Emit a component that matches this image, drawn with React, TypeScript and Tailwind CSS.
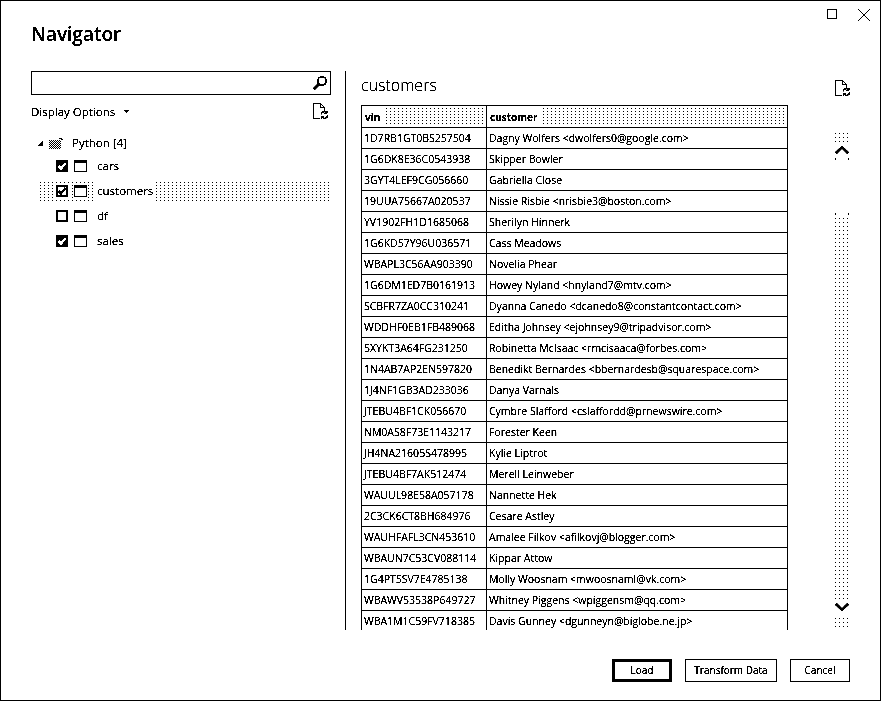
const vinRows: [string, string][] = [
  ["1D7RB1GT0BS257504", "Dagny Wolfers <dwolfers0@google.com>"],
  ["1G6DK8E36C0543938", "Skipper Bowler"],
  ["3GYT4LEF9CG056660", "Gabriella Close"],
  ["19UUA75667A020537", "Nissie Risbie <nrisbie3@boston.com>"],
  ["YV1902FH1D1685068", "Sherilyn Hinnerk"],
  ["1G6KD57Y96U036571", "Cass Meadows"],
  ["WBAPL3C56AA903390", "Novelia Phear"],
  ["1G6DM1ED7B0161913", "Howey Nyland <hnyland7@mtv.com>"],
  ["SCBFR7ZA0CC310241", "Dyanna Canedo <dcanedo8@constantcontact.com>"],
  ["WDDHF0EB1FB489068", "Editha Johnsey <ejohnsey9@tripadvisor.com>"],
  ["5XYKT3A64FG231250", "Robinetta McIsaac <rmcisaaca@forbes.com>"],
  ["1N4AB7AP2EN597820", "Benedikt Bernardes <bbernardesb@squarespace.com>"],
  ["1J4NF1GB3AD233036", "Danya Varnals"],
  ["JTEBU4BF1CK056670", "Cymbre Slafford <cslaffordd@prnewswire.com>"],
  ["NM0AS8F73E1143217", "Forester Keen"],
  ["JH4NA21605S478995", "Kylie Liptrot"],
  ["JTEBU4BF7AK512474", "Merell Leinweber"],
  ["WAUUL98E58A057178", "Nannette Hek"],
  ["2C3CK6CT8BH684976", "Cesare Astley"],
  ["WAUHFAFL3CN453610", "Amalee Filkov <afilkovj@blogger.com>"],
  ["WBAUN7C53CV088114", "Kippar Attow"],
  ["1G4PT5SV7E4785138", "Molly Woosnam <mwoosnaml@vk.com>"],
  ["WBAWV53538P649727", "Whitney Piggens <wpiggensm@qq.com>"],
  ["WBA1M1C59FV718385", "Davis Gunney <dgunneyn@biglobe.ne.jp>"],
];

const dither =
  "[background-image:linear-gradient(#fff_2px,transparent_2px),linear-gradient(90deg,#000_1px,transparent_1px)] [background-size:4px_3px]";
const sparse =
  "[background-image:linear-gradient(#fff_3px,transparent_3px),linear-gradient(90deg,#000_1px,transparent_1px)] [background-size:4px_4px]";

function RefreshDoc({ className }: { className?: string }) {
  return (
    <svg className={className} width="16" height="17" viewBox="0 0 16 17" fill="none" stroke="#000" strokeWidth="1">
      <path d="M7 15.500H.5V.5H7.500L11.500 4.500V7.500" />
      <path d="M7.500.5V4.500H11.500" />
      <path d="M8 11.500a3 3 0 0 1 5.500-1.500M14.500 12.500a3 3 0 0 1-5.500 1.500" strokeWidth="1.300" />
      <path d="M14 8v2.500h-2.500M8.500 16v-2.500H11" />
    </svg>
  );
}

function Check({ on, light }: { on: boolean; light?: boolean }) {
  return (
    <svg width="12" height="12" viewBox="0 0 12 12" className="shrink-0">
      <rect x="0" y="0" width="12" height="12" fill="#000" />
      {(!on || light) && <rect x="2" y="2" width="8" height="8" fill="#fff" />}
      {on && <path d="M2.500 6l2.500 2.500L9.500 3" stroke={light ? "#000" : "#fff"} strokeWidth={light ? 2 : 2.600} fill="none" />}
    </svg>
  );
}

function TableIcon() {
  return (
    <svg width="13" height="12" viewBox="0 0 13 12" className="shrink-0">
      <rect x=".5" y=".5" width="12" height="11" fill="#fff" stroke="#000" />
      <rect x="0" y="0" width="13" height="3" fill="#000" />
    </svg>
  );
}

function TreeRow({ label, on, selected }: { label: string; on: boolean; selected?: boolean }) {
  return (
    <div className={`mb-[3px] flex h-[22px] items-center pl-[16px] ${selected ? dither : ""}`}>
      <span className={`flex ${selected ? "ring-1 ring-white" : ""}`}>
        <Check on={on} light={selected} />
      </span>
      <span className={`ml-[6px] flex ${selected ? "ring-1 ring-white" : ""}`}>
        <TableIcon />
      </span>
      <span className={`ml-[10px] text-[11.500px] leading-[16px] ${selected ? "bg-white ring-2 ring-white" : ""}`}>{label}</span>
    </div>
  );
}

export default function App() {
  return (
    <div
      className="flex h-[701px] w-[881px] flex-col overflow-hidden border border-black bg-white text-black [filter:grayscale(1)_brightness(0.78)_contrast(12)]"
      style={{ fontFamily: '"Open Sans", "Noto Sans", sans-serif' }}
    >
      <div className="flex h-[16px] shrink-0 items-start justify-end gap-[21px] pr-[10px] pt-[8px]">
        <div className="h-[10px] w-[10px] border border-black" />
        <svg width="12" height="12" viewBox="0 0 12 12" stroke="#000" strokeWidth="1">
          <path d="M.5.5l11 11M11.500.5l-11 11" />
        </svg>
      </div>
      <div className="flex h-[54px] shrink-0 items-start pl-[30px] pt-[3px] text-[19px] font-semibold leading-[28px]">Navigator</div>
      <div className="flex min-h-0 flex-1">
        <div className="w-[344px] shrink-0 pl-[30px] pr-[15px]">
          <div className="flex h-[24px] w-[300px] items-center justify-end border border-black pr-[2px]">
            <svg width="16" height="16" viewBox="0 0 16 16" fill="none" stroke="#000">
              <circle cx="10" cy="6" r="4.200" strokeWidth="1.500" />
              <path d="M7 9l-5 5" strokeWidth="2.500" />
            </svg>
          </div>
          <div className="mt-[8px] flex h-[18px] items-center justify-between">
            <div className="flex items-center text-[11.500px] leading-[16px]">
              Display Options
              <svg width="5" height="3" viewBox="0 0 5 3" className="mb-[2px] ml-[9px]">
                <path d="M0 0h5L2.500 3z" />
              </svg>
            </div>
            <RefreshDoc className="mr-px mt-[-1px]" />
          </div>
          <div className="mt-[12px] flex h-[20px] items-center pl-[7px] text-[11.500px]">
            <svg width="5" height="5" viewBox="0 0 5 5">
              <path d="M5 0v5H0z" />
            </svg>
            <svg width="15" height="12" viewBox="0 0 15 12" className="ml-[5px]" stroke="#000" fill="none">
              <path d="M1 3.500h12M1 5.500h12M1 7.500h12M1 9.500h12M1 11.500h12" strokeDasharray="1 1" />
              <path d="M2 4.500h11M2 6.500h11M2 8.500h11M2 10.500h11" strokeDasharray="1 1" />
              <path d="M11 1.500h3v2" />
            </svg>
            <span className="ml-[9px] leading-[16px]">Python [4]</span>
          </div>
          <div className="mt-[2px] pl-[9px]">
            <TreeRow label="cars" on />
            <TreeRow label="customers" on selected />
            <TreeRow label="df" on={false} />
            <TreeRow label="sales" on />
          </div>
        </div>
        <div className="flex h-[559px] min-w-0 flex-1 overflow-hidden border-l border-black">
          <div className="w-[428px] shrink-0 pl-[15px]">
            <div className="flex h-[34px] items-center pb-[7px] text-[16px] font-light leading-[22px]">customers</div>
            <div className="w-[427px] border-l border-r border-t border-black text-[10.500px] leading-[20px]">
              <div className="flex h-[22px] border-b border-black text-[10px] font-bold">
                <div className={`flex w-[125px] shrink-0 items-center border-r border-black p-[2px] [background-clip:content-box] ${dither}`}>
                  <span className="bg-white pl-px pr-[4px]">vin</span>
                </div>
                <div className={`flex flex-1 items-center p-[2px] [background-clip:content-box] ${dither}`}>
                  <span className="bg-white pl-px pr-[4px]">customer</span>
                </div>
              </div>
              {vinRows.map(([vin, customer]) => (
                <div key={vin} className="flex h-[21px] border-b border-black">
                  <div className="w-[125px] shrink-0 whitespace-nowrap border-r border-black pl-[2px]">{vin}</div>
                  <div className="whitespace-nowrap pl-[2px]">{customer}</div>
                </div>
              ))}
            </div>
          </div>
          <div className="ml-[61px] flex h-full flex-col items-start">
            <RefreshDoc className="mt-[9px]" />
            <div className="ml-[-1px] mt-[33px] flex h-[498px] w-[16px] flex-col items-center">
              <div className={`h-[13px] w-[14px] ${sparse}`} />
              <svg width="14" height="10" viewBox="0 0 14 10" className="mt-[2px]" fill="none" stroke="#000">
                <path d="M1 8l6-6 6 6" strokeWidth="2.500" />
              </svg>
              <div className="mt-[3px] flex h-[5px] w-[14px] justify-between">
                <div className="h-[2px] w-px bg-black" />
                <div className="h-[2px] w-px bg-black" />
              </div>
              <div className="h-[47px]" />
              <div className="flex h-[5px] w-[14px] items-end justify-between">
                <div className="h-[2px] w-px bg-black" />
                <div className="h-[2px] w-px bg-black" />
              </div>
              <div className={`min-h-0 w-[14px] flex-1 ${sparse}`} />
              <svg width="14" height="10" viewBox="0 0 14 10" className="my-[3px]" fill="none" stroke="#000">
                <path d="M1 2l6 6 6-6" strokeWidth="2.500" />
              </svg>
              <div className={`h-[13px] w-[14px] ${sparse}`} />
            </div>
          </div>
        </div>
      </div>
      <div className="flex h-[70px] shrink-0 items-start justify-end gap-[13px] pr-[30px] pt-[29px] text-[10px]">
        <button className="flex h-[23px] w-[60px] items-center justify-center border-[3px] border-black">Load</button>
        <button className="flex h-[23px] w-[92px] items-center justify-center border border-black">Transform Data</button>
        <button className="flex h-[23px] w-[60px] items-center justify-center border border-black">Cancel</button>
      </div>
    </div>
  );
}
